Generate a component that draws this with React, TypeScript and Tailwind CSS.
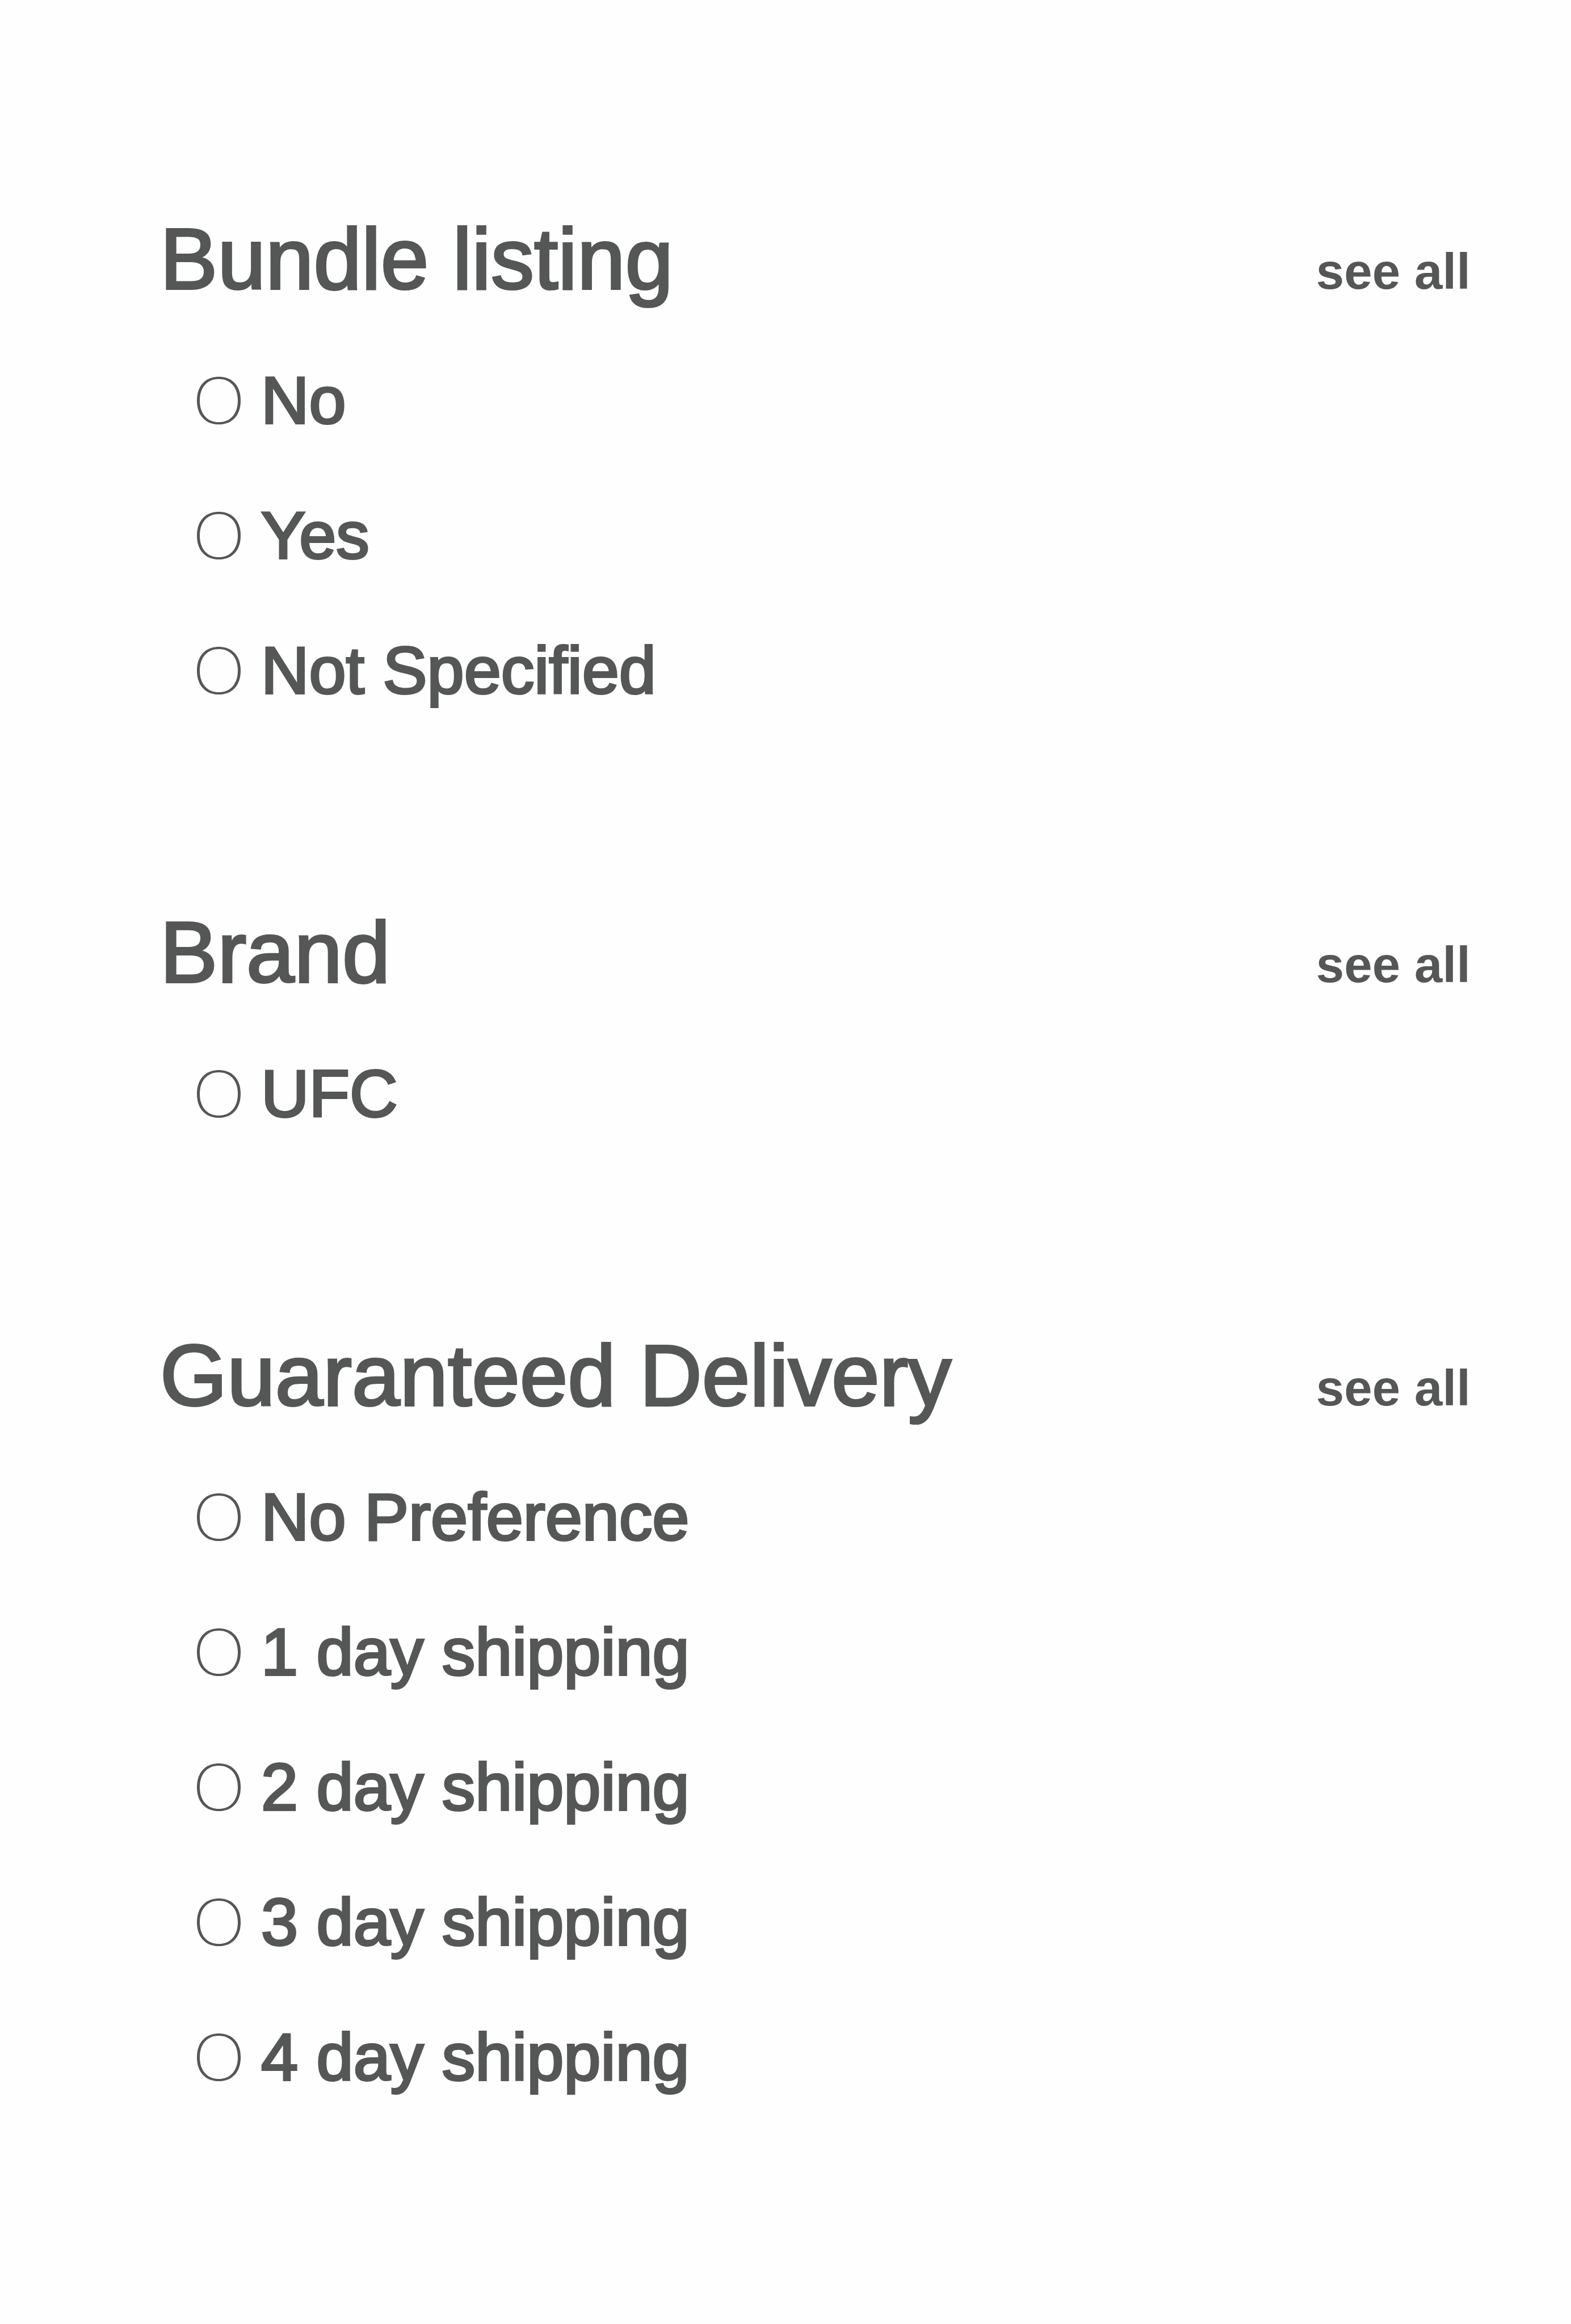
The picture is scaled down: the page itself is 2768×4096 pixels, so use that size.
import { useState } from "react";

type FilterGroup = {
  id: string;
  title: string;
  options: string[];
};

const groups: FilterGroup[] = [
  { id: "bundle", title: "Bundle listing", options: ["No", "Yes", "Not Specified"] },
  { id: "brand", title: "Brand", options: ["UFC"] },
  {
    id: "delivery",
    title: "Guaranteed Delivery",
    options: [
      "No Preference",
      "1 day shipping",
      "2 day shipping",
      "3 day shipping",
      "4 day shipping",
    ],
  },
];

function FilterSection({ group }: { group: FilterGroup }) {
  const [selected, setSelected] = useState<string | null>(null);

  return (
    <section id={group.id} aria-labelledby={`${group.id}-title`}>
      <header className="flex items-baseline justify-between">
        <h2
          id={`${group.id}-title`}
          className="text-[152px] leading-[238px] font-normal [-webkit-text-stroke:4px_#555756]"
        >
          {group.title}
        </h2>
        <a href={`#${group.id}`} className="text-[89px] leading-none font-bold">
          see all
        </a>
      </header>
      <div role="radiogroup" aria-labelledby={`${group.id}-title`} className="mt-3 pl-[65px]">
        {group.options.map((option) => {
          const id = `${group.id}-${option.toLowerCase().replace(/\s+/g, "-")}`;
          return (
            <div key={option} className="flex items-center gap-[36px]">
              <input
                type="radio"
                id={id}
                name={group.id}
                checked={selected === option}
                onChange={() => setSelected(option)}
                className="h-[84px] w-[77px] shrink-0 cursor-pointer appearance-none rounded-[50%] border-x-[5px] border-y-4 border-[#555756] bg-transparent [corner-shape:superellipse(1.15)] checked:bg-[#555756]"
              />
              <label
                htmlFor={id}
                className="cursor-pointer text-[117px] leading-[238px] [-webkit-text-stroke:4px_#555756]"
              >
                {option}
              </label>
            </div>
          );
        })}
      </div>
    </section>
  );
}

export default function App() {
  return (
    <main className="flex min-h-screen flex-col gap-[258px] bg-[#fefefe] pt-[337px] pr-[177px] pl-[282px] font-['Liberation_Sans',Arial,sans-serif] text-[#555756]">
      {groups.map((group) => (
        <FilterSection key={group.id} group={group} />
      ))}
    </main>
  );
}
